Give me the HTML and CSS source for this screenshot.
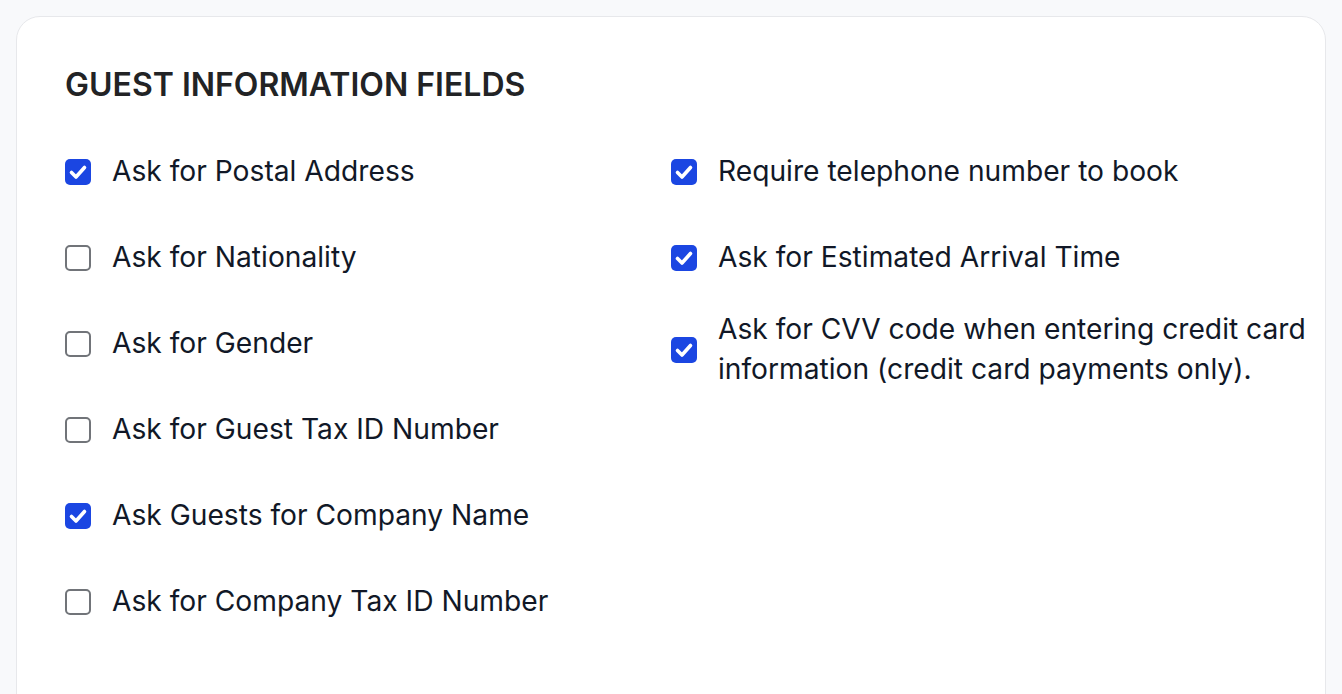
FILE: index.html
```html
<!DOCTYPE html>
<html lang="en">
<head>
    <meta charset="UTF-8">
    <meta name="viewport" content="width=device-width, initial-scale=1.0">
    <title>Guest Information Fields</title>
    <link rel="stylesheet" href="styles.css">
</head>
<body>
    <div class="card">
        <h2 class="title">GUEST INFORMATION FIELDS</h2>

        <div class="columns">
            <div class="column">
                <label class="option">
                    <span class="box checked"><svg viewBox="0 0 26 26"><path d="M6.5 13.5l4.5 4.5 8.5-9.5"/></svg></span>
                    <span class="text">Ask for Postal Address</span>
                </label>
                <label class="option">
                    <span class="box"></span>
                    <span class="text">Ask for Nationality</span>
                </label>
                <label class="option">
                    <span class="box"></span>
                    <span class="text">Ask for Gender</span>
                </label>
                <label class="option">
                    <span class="box"></span>
                    <span class="text">Ask for Guest Tax ID Number</span>
                </label>
                <label class="option">
                    <span class="box checked"><svg viewBox="0 0 26 26"><path d="M6.5 13.5l4.5 4.5 8.5-9.5"/></svg></span>
                    <span class="text">Ask Guests for Company Name</span>
                </label>
                <label class="option">
                    <span class="box"></span>
                    <span class="text">Ask for Company Tax ID Number</span>
                </label>
            </div>

            <div class="column">
                <label class="option">
                    <span class="box checked"><svg viewBox="0 0 26 26"><path d="M6.5 13.5l4.5 4.5 8.5-9.5"/></svg></span>
                    <span class="text">Require telephone number to book</span>
                </label>
                <label class="option">
                    <span class="box checked"><svg viewBox="0 0 26 26"><path d="M6.5 13.5l4.5 4.5 8.5-9.5"/></svg></span>
                    <span class="text">Ask for Estimated Arrival Time</span>
                </label>
                <label class="option">
                    <span class="box checked"><svg viewBox="0 0 26 26"><path d="M6.5 13.5l4.5 4.5 8.5-9.5"/></svg></span>
                    <span class="text">Ask for CVV code when entering credit card information (credit card payments only).</span>
                </label>
            </div>
        </div>
    </div>
</body>
</html>
```

FILE: styles.css
```css
body {
    margin: 0;
    padding: 16px;
    background-color: #f8f9fb;
    font-family: Inter, "Noto Sans", sans-serif;
}
.card {
    background-color: #fff;
    border: 1px solid #e7e8eb;
    border-radius: 24px;
    padding: 48px 14px 60px 48px;
    min-height: 700px;
}
.title {
    margin: 0 0 32px;
    font-size: 32px;
    line-height: 40px;
    font-weight: 600;
    color: #222325;
}
.columns {
    display: grid;
    grid-template-columns: 606px 1fr;
}
.column {
    display: flex;
    flex-direction: column;
    gap: 18px;
}
.option {
    display: flex;
    align-items: center;
    gap: 21px;
    min-height: 68px;
    cursor: pointer;
}
.box {
    flex: none;
    width: 26px;
    height: 26px;
    box-sizing: border-box;
    border: 2px solid #717479;
    border-radius: 5px;
    background-color: #fff;
    margin-top: 2px;
}
.box.checked {
    border: none;
    background-color: #1b46e2;
}
.box svg {
    display: block;
    width: 26px;
    height: 26px;
    fill: none;
    stroke: #fff;
    stroke-width: 3.6;
    stroke-linecap: round;
    stroke-linejoin: round;
}
.text {
    font-size: 28.2px;
    line-height: 40px;
    color: #111827;
}
```
